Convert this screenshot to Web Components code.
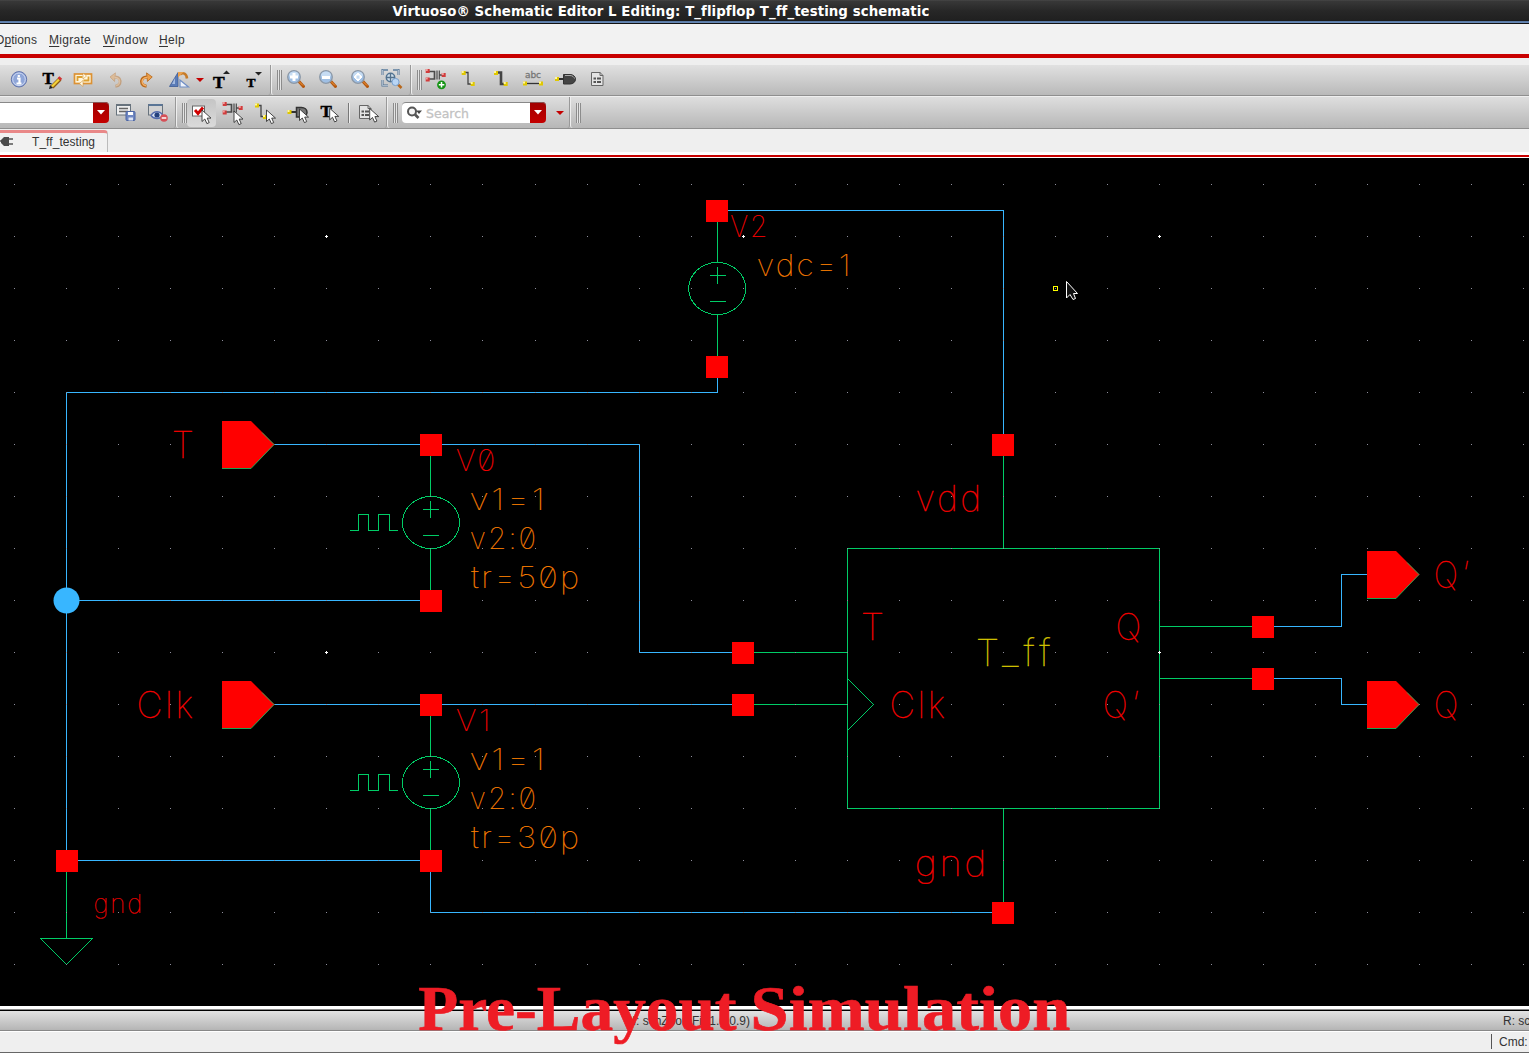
<!DOCTYPE html>
<html lang="en"><head><meta charset="utf-8"><title>Virtuoso Schematic Editor</title>
<style>html,body{margin:0;height:100%;overflow:hidden;background:#efefef}</style></head>
<body><schematic-app></schematic-app>
<script>
const define=(name,html,init)=>customElements.define(name,class extends HTMLElement{
  constructor(){super();this.attachShadow({mode:'open'}).innerHTML=html;}
  connectedCallback(){if(init)init(this,this.shadowRoot);}
});

/* ---- icons: origin is the centre of the button ---- */
const sq=(x,y,c)=>`<rect x="${x-2}" y="${y-2}" width="4" height="4" fill="${c||'#e0c800'}"/><rect x="${x-2}" y="${y-2}" width="2" height="2" fill="${c?'#f0a0a0':'#fff7a0'}"/>`;
const cur=(x,y)=>`<path d="M${x} ${y}v11.5l2.8-2.5 2.1 4.6 2.3-1-2-4.5h3.8z" fill="#fff" stroke="#333" stroke-width=".9"/>`;
const bigT=(x,y,s)=>`<text x="${x}" y="${y}" font-family="Liberation Serif" font-weight="700" font-size="${s}" fill="#000" stroke="#000" stroke-width=".5">T</text>`;
const lens=(inner)=>`<path d="M4 1.500l4.500 5" stroke="#b4560c" stroke-width="3" stroke-linecap="round"/><path d="M4 1.500l4 4" stroke="#f09a40" stroke-width="1"/><circle cx="-1" cy="-3" r="6.300" fill="#9fbfe4" stroke="#8c98a6" stroke-width="1.300"/><ellipse cx="-1" cy="-5" rx="5" ry="3.500" fill="#c6dcf3"/>${inner}`;
const inst=(y)=>`<path d="M-8 ${y+.5}h6.500v7.500h-6.500M3 ${y+4}h5" stroke="#4a4a4a" stroke-width="1.700" fill="none"/><path d="M1 ${y-.5}v9M3.300 ${y-.5}v9" stroke="#4a4a4a" stroke-width="1.200"/>${sq(-8.3,y,'#d23c3c')}${sq(-8.3,y+8.5,'#d23c3c')}${sq(7.7,y+4,'#d23c3c')}`;
const doc=(x,y)=>`<path d="M${x+.5} ${y+.5}h8.500l3 3v10h-11.500z" fill="#e4e4e4" stroke="#666"/><path d="M${x+9} ${y}v3.500h3" fill="none" stroke="#666"/><path d="M${x+2.500} ${y+6.500}h2.500M${x+6} ${y+6.500}h4M${x+2.500} ${y+10}h2.500M${x+6} ${y+10}h4" stroke="#555" stroke-width="2"/>`;
const curve=`<path d="M-.5 6.500c-5-.5-6.500-4.500-4.500-7.500 1-1.500 2.500-2.200 5-2.200" fill="none" stroke="#b9691b" stroke-width="3.200"/><path d="M-.5-7.500l6 4.300-5 4.700z" fill="#eda04b" stroke="#b9691b" stroke-width=".9"/><path d="M-1 6c-4-.8-5-4-3.500-6.700 1-1.500 2.500-2.300 5-2.300" fill="none" stroke="#f3b068" stroke-width="1.600"/>`;
const ICONS={
 info:`<circle cx="0" cy="-.7" r="7.700" fill="#8fa6d8" stroke="#6476ad"/><circle cx="0" cy="-.7" r="6.300" fill="none" stroke="#cfd9f3"/><path d="M-.2-5v2M-2-1.500h2.500v5M-2.500 3.500h5" stroke="#fff" stroke-width="2.200" fill="none"/>`,
 textedit:bigT(-8.500,3.500,17)+`<path d="M9-1L1 7" stroke="#8a5a10" stroke-width="4"/><path d="M8-.5L1 6.500" stroke="#f3d23a" stroke-width="2.300"/><path d="M9.800-2.500L8-.6" stroke="#cf3434" stroke-width="3.800"/><path d="M-2 9l1-4 3 3z" fill="#222"/>`,
 loop:`<rect x="-8.500" y="-6" width="17" height="9.500" fill="#fff6dc" stroke="#dc9234" stroke-width="1.700"/><path d="M-5.500 1v-4h5M5.500-3.500v4h-5" stroke="#dca032" stroke-width="1.800" fill="none"/><path d="M0-7l3.500 3-3.500 3zM0 .5l-3.500 3 3.500 3z" fill="#fffbe8" stroke="#d4943c" stroke-width=".6"/>`,
 undo:`<g opacity=".42" transform="scale(-.9 .95)">${curve}</g>`,
 redo:`<g transform="scale(.95 .95)">${curve}</g>`,
 rotate:`<path d="M-1-7.500v14h-8.500z" fill="#5b7cb8" stroke="#3c5b95" stroke-width=".8"/><path d="M-4-2v6h-3z" fill="#a5bbdf"/><path d="M1 0v7h8.500z" fill="#eef3fb" stroke="#6f8dc4" stroke-width="1.200"/><path d="M1-5.500c3-2.500 6.500-1 7 4" fill="none" stroke="#c77b28" stroke-width="2.600"/><path d="M4.500-8h-5.500v5.500z" fill="#e9a04e"/>`,
 tup:bigT(-8,8,17.500)+`<path d="M2-6l3.500-3.500L9-6z" fill="#222"/>`,
 tdown:bigT(-6.500,7,13.500)+`<path d="M2-8h7l-3.500 3.500z" fill="#222"/>`,
 zin:lens(`<path d="M-1-7v8M-5-3h8" stroke="#fff" stroke-width="3"/>`),
 zout:lens(`<path d="M-5-2.500h8" stroke="#fff" stroke-width="3"/>`),
 zfit:lens(`<path d="M-5-3l2-2v4zM3-3l-2-2v4zM-1-7l2 2h-4zM-1 1l2-2h-4z" fill="#fff" stroke="#fff"/>`),
 zarea:`<path d="M-8.500-5v-5h5.500M2-10h5.500v5M-8.500 0v5.500h5.500" fill="none" stroke="#4f7193" stroke-width="2"/><path d="M-8.500-5v-5h5.500M2-10h5.500v5M-8.500 0v5.500h5.500" fill="none" stroke="#fff" stroke-width=".5"/><circle cx="-.5" cy="-2.500" r="4.200" fill="#cfdfeb" stroke="#527493" stroke-width="1.500"/><path d="M-.5-7v9M-5-2.500h9" stroke="#54718c" stroke-width="1.300"/><path d="M7 4.500l3.500 3.500" stroke="#b8671b" stroke-width="2.500"/><circle cx="4.500" cy="2" r="3.600" fill="#b8d5f5" stroke="#79a0cc"/>`,
 inst:inst(-9)+`<circle cx="5.500" cy="4.800" r="4.400" fill="#149414"/><path d="M5.500 2v5.500M2.800 4.800h5.500" stroke="#fff" stroke-width="1.500"/>`,
 wire:`<path d="M-4-7.500H0V4H4.500" fill="none" stroke="#444" stroke-width="1.300"/>${sq(-4.300,-7)}${sq(4.700,4)}`,
 wwire:`<path d="M-5-7.500H0V4H4.500" fill="none" stroke="#444" stroke-width="2.600"/>${sq(-5,-7)}${sq(4.700,4)}`,
 abc:`<text x="-8" y="-2" font-family="DejaVu Sans" font-size="9" textLength="16" fill="#777" stroke="#777" stroke-width=".3">abc</text><path d="M-8 3.500H8" stroke="#333" stroke-width="1.300"/>${sq(-8,3.500)}${sq(8,3.500)}`,
 pin:`<path d="M-8-1h8" stroke="#333" stroke-width="2"/><path d="M-1.500-5.500h6.500c3 0 5.500 2 5.500 4.700S8 4 5 4h-6.500z" fill="#444" stroke="#333"/><path d="M0-4.500h5c2.500 0 4 1.500 4.500 3" stroke="#aaa" fill="none"/>${sq(-8,-1)}`,
 doc:doc(-6,-8),
 save:`<rect x="-9.500" y="-8.500" width="14" height="10.500" fill="#eee" stroke="#68737d"/><path d="M-9.500-8h14" stroke="#68737d" stroke-width="2"/><path d="M-7-4.500h9M-7-1.500h9" stroke="#666" stroke-width="1.300"/><rect x="0" y="-1.500" width="9" height="9" rx="1" fill="#6f87c2" stroke="#4c65a3"/><path d="M2-1h5v3H2z" fill="#fff"/><path d="M2.500 4.500h4.500v3H2.500z" fill="#dce3f3"/>`,
 eye:`<rect x="-9.500" y="-8.500" width="14" height="10.500" fill="#d2d2d2" stroke="#68737d"/><path d="M-9.500-8h14" stroke="#5a7596" stroke-width="2"/><path d="M-7 2.500c3-5 9-5 12 0-3 4-9 4-12 0z" fill="#dde5f5" stroke="#536bad" stroke-width="1.300"/><circle cx="-1" cy="2" r="2.600" fill="#24407d"/><circle cx="6" cy="5" r="3.800" fill="#d65058"/><path d="M3.700 5h4.600" stroke="#fff" stroke-width="1.500"/>`,
 check:`<rect x="-8.500" y="-7" width="12" height="10" fill="#fff" stroke="#666"/><path d="M-6-3l3 3.500 5-6" fill="none" stroke="#d00000" stroke-width="2.800"/>${cur(1,-3)}`,
 sinst:inst(-9)+cur(1,-2), swire:`<path d="M-8-7.500h4V3.500h4" fill="none" stroke="#444" stroke-width="1.300"/>${sq(-8,-7.500)}${sq(0,4)}${cur(1.500,-3)}`,
 spin:`<path d="M-8-1h8" stroke="#333" stroke-width="2"/><path d="M-1.500-5.500h5c3 0 5.500 2 5.500 4.700S7 4 4 4h-5.500z" fill="#777" stroke="#333" stroke-width="1.500"/>${sq(-8.500,-1)}${cur(1.500,-4)}`,
 stext:bigT(-8.500,4,17)+cur(.7,-4.700), sdoc:doc(-9,-8)+cur(1.700,-4.500)
};
define('tool-button',`<style>:host{display:block;width:32px;height:30px;flex:none;position:relative}
:host([pressed])::before{content:"";position:absolute;left:2px;top:1px;width:29px;height:28px;border-radius:4px;background:linear-gradient(#c5c5c5,#dadada)}
svg{position:relative;display:block;width:32px;height:30px;overflow:visible}</style><svg viewBox="-16 -15 32 30"></svg>`,
 (h,r)=>{r.querySelector('svg').innerHTML=ICONS[h.getAttribute('icon')];});
define('tool-grip',`<style>:host{display:block;flex:none;width:5px;height:20px;margin-left:5px;margin-right:-1px;background:repeating-linear-gradient(90deg,#8c8c8c 0 1px,#e4e4e4 1px 2px)}</style>`);
define('tool-segment',`<style>:host{display:flex;align-items:center;box-sizing:border-box;flex:none;height:100%;border-left:1px solid #eee;border-right:1px solid #999;border-radius:0 0 3px 3px;}</style><slot></slot>`);
define('tool-row',`<style>:host{display:flex;box-sizing:border-box;height:31px;border-bottom:1px solid #8f8f8f;background:linear-gradient(#e1e1e1,#b9b9b9)}:host([second]){height:32px;background:linear-gradient(#dedede,#b7b7b7)}</style><slot></slot>`);
define('drop-arrow',`<style>:host{display:block;flex:none;width:10px}svg{display:block}</style><svg width="10" height="6"><path d="M1 1h8L5 5z" fill="#c40000"/></svg>`);
define('red-drop',`<style>:host{display:flex;align-items:center;justify-content:center;width:16px;height:21px;flex:none;border-radius:0 4px 4px 0;background:linear-gradient(#a00000,#c40000);box-shadow:0 1px 0 #8b5555 inset}</style><svg width="8" height="5"><path d="M0 0h8L4 4.500z" fill="#fff"/></svg>`);
define('combo-box',`<style>:host{display:flex;flex:none;width:109px;height:21px;box-sizing:border-box;margin-right:1px}i{flex:1;background:#fff;border-top:1px solid #888}</style><i></i><red-drop></red-drop>`);
define('search-box',`<style>:host{display:flex;flex:none;width:144px;height:21px;margin-left:5px;color:#c2c2c2}
div{flex:1;display:flex;align-items:center;background:#fff;border-top:1px solid #888;border-radius:4px 0 0 4px;box-sizing:border-box}
svg{margin:0 4px 0 4px;flex:none}span{font:12.500px "DejaVu Sans",sans-serif;-webkit-text-stroke:.3px #c2c2c2}</style><div><svg width="16" height="14"><circle cx="6" cy="5.500" r="4" fill="#f5f5f5" stroke="#555" stroke-width="2"/><path d="M9 8.500l3.500 3.500" stroke="#555" stroke-width="2.600"/><path d="M10 4.500h6L13 8z" fill="#444"/></svg><span>Search</span></div><red-drop></red-drop>`);
define('tool-sep',`<style>:host{display:block;flex:none;width:1px;height:20px;margin:0 2px 0 3px;background:#777;border-right:1px solid #eee}</style>`);

/* spreads a run of text over a given width by letter spacing */
const spread=(s,width)=>{const w=s.getBoundingClientRect().width;s.style.letterSpacing=((width-w)/s.textContent.length)+'px';};
define('title-bar',`<style>:host{display:flex;justify-content:center;box-sizing:border-box;height:24px;padding-right:207px;background:linear-gradient(#4b4b4b 0,#383838 1px,#272727 11px,#202020 20px,#161616 21px,#55749f 21px,#6a8cba 23px,#111 23px);color:#fff;font:bold 13.330px/23px "DejaVu Sans",sans-serif;white-space:nowrap}</style><span>Virtuoso® Schematic Editor L Editing: T_flipflop T_ff_testing schematic</span>`,
 (h,r)=>spread(r.querySelector('span'),535));
define('menu-item',`<style>:host{display:block;flex:none;white-space:nowrap;width:var(--w)}u{text-underline-offset:2px}</style><span></span>`,
 (h,r)=>{const t=h.dataset.text,k=+h.dataset.key,s=r.querySelector('span');s.innerHTML=`${t.slice(0,k)}<u>${t[k]}</u>${t.slice(k+1)}`;spread(s,+h.dataset.w);});
define('menu-bar',`<style>:host{display:flex;box-sizing:border-box;height:34px;background:#f2f2f2;border-bottom:4px solid #c90000;padding-top:1px;font:12px/30px "Liberation Sans",sans-serif;color:#333}</style>
<menu-item data-text="Options" data-key="1" data-w="42" style="margin-left:-5px;--w:54px"></menu-item><menu-item data-text="Migrate" data-key="0" data-w="42" style="--w:54px"></menu-item><menu-item data-text="Window" data-key="0" data-w="45" style="--w:56px"></menu-item><menu-item data-text="Help" data-key="0" data-w="26"></menu-item>`);
define('tab-strip',`<style>:host{display:flex;box-sizing:border-box;height:29px;background:#efefef;border-bottom:1px solid #fff;padding-top:1px;font:12px/22px "Liberation Sans",sans-serif;color:#333;box-shadow:0 -2px 0 #c90000 inset,0 -5px 0 #fff inset}
div{display:flex;box-sizing:border-box;width:108px;height:22px;border-top:3px solid #e98888;border-right:1px solid #bbb;border-radius:0 4px 0 0;background:#f1f1f1;line-height:19px}svg{flex:none;margin-top:3px}span{margin-left:18px;letter-spacing:.05px}</style>
<div><svg width="14" height="12"><path d="M0 5h2M9 3h4M9 8h4" stroke="#555" stroke-width="1.600"/><path d="M1 4l3-3h5v9h-5l-3-3z" fill="#4b4b4b"/></svg><span>T_ff_testing</span></div>`);
define('status-bar',`<style>:host{display:flex;flex-direction:column;height:47px;font:12px/20px "Liberation Sans",sans-serif;color:#333;background:#efefef}
.e{height:3px;background:#fff;border-bottom:1px solid #8a8a8a}.k{height:1px;background:#000}
.m{display:flex;height:19px;background:linear-gradient(#e2e2e2,#b5b5b5);border-bottom:1px solid #888;white-space:nowrap}.m span:first-child{flex:none;width:877px;margin-left:626px}
.c{height:20px;border-top:1px solid #fff;border-bottom:1px solid #666;display:flex;justify-content:flex-end;white-space:nowrap}.c span{width:30px;margin-top:2px;height:15px;line-height:17px;border-left:1px solid #555;padding-left:7px}</style>
<div class="e"></div><div class="k"></div><div class="m"><span>M: schZoomFit(1.0 0.9)</span><span>R: sc</span></div><div class="c"><span>Cmd:</span></div>`);

/* ---- text whose ink box is fitted to [x0..x1] and a cap height ---- */
const meter=document.createElement('canvas').getContext('2d');
function inkText(s,x0,x1,base,capH,fill,family,weight,spacing=0,extra=''){
  meter.font=`${weight} 100px ${family}`;
  const m=meter.measureText(s),cap=meter.measureText('T').actualBoundingBoxAscent;
  const ink=m.actualBoundingBoxRight+m.actualBoundingBoxLeft+spacing*(s.length-1);
  const sx=(x1-x0)/ink,sy=capH/cap;
  return `<text transform="translate(${x0+m.actualBoundingBoxLeft*sx} ${base}) scale(${sx} ${sy})" font-size="100" fill="${fill}" ${extra} style='font-family:${family};font-weight:${weight};letter-spacing:${spacing}px;font-feature-settings:"zero"'>${s}</text>`;
}
define('schematic-canvas',`<style>:host{display:block;flex:none;height:848px;background:#000}svg{display:block}</style><svg width="1529" height="848" viewBox="0 158 1529 848"></svg>`,(h,r)=>{
  const B='#38b6ff',G='#00cc66',R='#ff0000',O='#ff8000';let o='';
  const line=(c,...p)=>{o+=`<polyline points="${p.map(v=>v+.5).join(' ')}" fill="none" stroke="${c}" stroke-linecap="square" shape-rendering="crispEdges"/>`};
  const box=(x,y)=>{o+=`<rect x="${x-11}" y="${y-10}" width="22" height="22" fill="${R}" shape-rendering="crispEdges"/>`};
  const label=(s,x0,x1,b,c,f,sp=7)=>{o+=inkText(s,x0,x1-1,b,c,f,'Inter',100,sp,'stroke="'+f+'" stroke-width=".8"')};
  const dots=()=>{for(let j=0;j<16;j++)for(let i=0;i<29;i++){const x=Math.round(14.200+52.030*i),y=184+52*j;
    if(i%8===6&&j%8===1)o+=`<path d="M${x-1} ${y}h3v1h-3zM${x} ${y-1}h1v3h-1z" fill="#fff"/>`;
    else o+=`<rect x="${x}" y="${y}" width="1" height="1" fill="#8e8e9c"/>`;}
    for(let j=0;j<16;j++)o+=`<rect x="1523" y="${184+52*j}" width="1" height="1" fill="#8e8e9c"/>`;};
  line(B,717,210,1003,210,1003,444);line(B,717,366,717,392,66,392,66,860,430,860);line(B,66,600,430,600);
  line(B,274,444,639,444,639,652,742,652);line(B,274,704,742,704);line(B,430,860,430,912,1003,912);
  line(B,1262,626,1341,626,1341,574,1367,574);line(B,1262,678,1341,678,1341,704,1367,704);
  line(G,1003,444,1003,548);line(G,1003,808,1003,902);line(G,742,652,847,652);line(G,742,704,847,704);
  line(G,1160,626,1262,626);line(G,1160,678,1262,678);line(G,847,548,1159,548,1159,808,847,808,847,548);line(G,848,679,873,704,848,729);
  line(G,66,872,66,938);line(G,40,938,92,938,66,964,40,938);
  const source=(x,y)=>{line(G,x,y-78,x,y-26);line(G,x,y+26,x,y+78);
    o+=`<ellipse cx="${x+(x===430?1:.2)}" cy="${y+.5}" rx="28.500" ry="26" fill="none" stroke="${G}" shape-rendering="crispEdges"/>`;
    line(G,x-7,y-13,x+8,y-13);line(G,x,y-21,x,y-5);line(G,x-7,y+13,x+8,y+13);};
  source(717,288);source(430,522);source(430,782);
  for(const y of[530,790])line(G,350,y,358,y,358,y-16,368,y-16,368,y,378,y,378,y-16,389,y-16,389,y,397,y);
  dots();
  [[717,210],[717,366],[1003,444],[431,444],[431,600],[431,704],[431,860],[67,860],[743,652],[743,704],[1263,626],[1263,678],[1003,912]].forEach(p=>box(...p));
  for(const[x,y]of[[222,444],[222,704],[1367,574],[1367,704]])o+=`<path d="M${x} ${y-23}h29l23.500 23.500-23.500 24h-29z" fill="${R}"/><path d="M${x} ${y+24.500}h29l23-24-12-12" fill="none" stroke="${G}" stroke-width=".8"/>`;
  o+=`<circle cx="66.500" cy="600.500" r="13" fill="${B}"/>`;
  label('V2',731,766,237,22,R);label('vdc=1',758,848,276,22,O);
  label('V0',457,494,471,22,R);label('v1=1',471,542,510,22,O);label('v2:0',471,535,549,22,O);label('tr=50p',471,578,588,22,O);
  label('V1',457,488,731,22,R);label('v1=1',471,542,770,22,O);label('v2:0',471,535,809,22,O);label('tr=30p',471,578,848,22,O);
  label('T',174,193,458,27,R);label('Clk',139,193,718,27,R);
  label('vdd',917,979,511,26,R);label('gnd',917,984,876,26,R);label('gnd',95,141,913,19,R);
  label('T',863,883,640,27,R);label('Clk',892,945,718,27,R);label('Q',1118,1140,640,27,R);label("Q’",1105,1139,718,27,R,14);
  label('T_ff',978,1051,666,27,'#dccc00',13);label("Q’",1436,1469,588,27,R,14);label('Q',1436,1457,718,27,R);
  o+=`<rect x="1053.500" y="286.500" width="4" height="4" fill="none" stroke="#ff0"/><path d="M1066.500 281.500v16.500l3.500-3.500 3 5 2.500-1-2-5h4z" fill="#111" stroke="#fff"/>`;
  r.querySelector('svg').innerHTML=o;
});
define('caption-overlay',`<style>:host{display:block;position:absolute;left:0;top:970px;pointer-events:none}svg{display:block}</style><svg width="1529" height="83" viewBox="0 970 1529 83"></svg>`,(h,r)=>{
  const word=(s,a,b)=>inkText(s,a,b,1030,41,'#ee1c25','"Liberation Serif"',700,0,'stroke="#ee1c25" stroke-width="1"');
  r.querySelector('svg').innerHTML=word('Pre-Layout',419,736.500)+word('Simulation',754,1070);});

define('schematic-app',`<style>:host{display:flex;flex-direction:column;position:relative;width:1529px;height:1053px;overflow:hidden;background:#efefef}title-bar,menu-bar,tool-row,tab-strip,status-bar{flex:none}
.one{margin-top:7px}.two{margin-top:1px}</style>
<title-bar></title-bar><menu-bar></menu-bar>
<tool-row class="one">
<tool-segment style="width:271px;padding-left:2px;border-left-color:transparent"><tool-button icon="info"></tool-button><tool-button icon="textedit"></tool-button><tool-button icon="loop"></tool-button><tool-button icon="undo"></tool-button><tool-button icon="redo"></tool-button><tool-button icon="rotate"></tool-button><drop-arrow></drop-arrow><tool-button icon="tup"></tool-button><tool-button icon="tdown"></tool-button></tool-segment>
<tool-segment style="width:140px"><tool-grip></tool-grip><tool-button icon="zin" style="margin-left:-2px"></tool-button><tool-button icon="zout"></tool-button><tool-button icon="zfit"></tool-button><tool-button icon="zarea"></tool-button></tool-segment>
<tool-segment style="flex:1;border-right:0"><tool-grip></tool-grip><tool-button icon="inst" style="margin-left:-1px"></tool-button><tool-button icon="wire"></tool-button><tool-button icon="wwire" style="margin-left:1px"></tool-button><tool-button icon="abc"></tool-button><tool-button icon="pin"></tool-button><tool-button icon="doc"></tool-button></tool-segment></tool-row>
<tool-row second class="two">
<tool-segment style="width:176px;border-left:0"><combo-box></combo-box><tool-button icon="save"></tool-button><tool-button icon="eye"></tool-button></tool-segment>
<tool-segment style="width:211px"><tool-grip></tool-grip><tool-button icon="check" pressed style="margin-left:-1px"></tool-button><tool-button icon="sinst"></tool-button><tool-button icon="swire"></tool-button><tool-button icon="spin" style="margin-left:1px;margin-right:-1px"></tool-button><tool-button icon="stext"></tool-button><tool-sep></tool-sep><tool-button icon="sdoc"></tool-button></tool-segment>
<tool-segment style="width:183px"><tool-grip></tool-grip><search-box></search-box><drop-arrow style="margin-left:9px"></drop-arrow></tool-segment>
<tool-segment style="flex:1;border-right:0"><tool-grip></tool-grip></tool-segment></tool-row>
<tab-strip></tab-strip><schematic-canvas></schematic-canvas><status-bar></status-bar><caption-overlay></caption-overlay>`);
</script></body></html>
